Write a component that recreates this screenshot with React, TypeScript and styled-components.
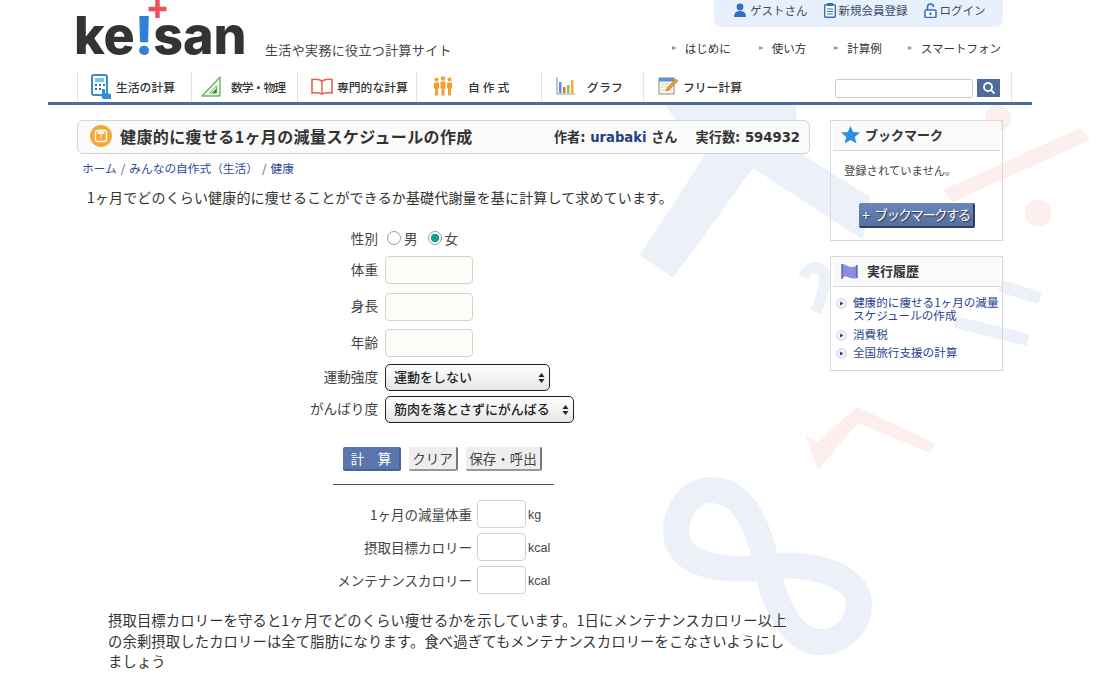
import styled, { createGlobalStyle } from "styled-components";

const GlobalStyle = createGlobalStyle`
  html, body {
    margin: 0;
    padding: 0;
    background: #fff;
  }
  body {
    font-family: "Noto Sans CJK JP", "Noto Sans", sans-serif;
    color: #333;
  }
`;

const Page = styled.div`
  position: relative;
  width: 1100px;
  height: 682px;
  overflow: hidden;
`;

const Decor = styled.svg`
  position: absolute;
  left: 0;
  top: 105px;
`;

const Shell = styled.div`
  position: relative;
  width: 984px;
  margin-left: 48px;
`;

const Header = styled.header`
  background: #fff;
  border-bottom: 3px solid #4f6a9f;
`;

const HeaderTop = styled.div`
  display: flex;
  justify-content: space-between;
  height: 72px;
  padding: 0 29px;
`;

const Brand = styled.div`
  display: flex;
  align-items: flex-end;
  gap: 23px;
`;

const Logo = styled.div`
  position: relative;
  width: 168px;
  height: 60px;
  margin-bottom: 6px;
  margin-left: -3px;
  font-family: Inter, sans-serif;
  font-weight: 800;
  font-size: 52px;
  line-height: 60px;
  letter-spacing: -0.1px;
  color: #333;
  white-space: nowrap;
`;

const Bang = styled.span`
  color: #2f80d8;
`;

const Plus = styled.svg`
  position: absolute;
  left: 74px;
  top: -6px;
`;

const Tagline = styled.div`
  margin-bottom: 14px;
  font-size: 13px;
  line-height: 16px;
  letter-spacing: 0.35px;
  color: #444;
`;

const TopRight = styled.div`
  display: flex;
  flex-direction: column;
  align-items: flex-end;
`;

const UserBox = styled.div`
  display: flex;
  align-items: center;
  width: 289px;
  height: 27px;
  padding: 0 18px 7px 19px;
  box-sizing: border-box;
  gap: 16px;
  background: #e8f0fb;
  border-radius: 0 0 8px 8px;
`;

const UserLink = styled.span`
  display: flex;
  align-items: center;
  gap: 3px;
  font-size: 11.5px;
  line-height: 14px;
  color: #3a4a6a;
  white-space: nowrap;
`;

const SubNav = styled.div`
  display: flex;
  gap: 28px;
  margin-top: 14px;
  margin-right: 2px;
`;

const SubLink = styled.span`
  display: flex;
  align-items: center;
  gap: 8px;
  font-size: 11.5px;
  line-height: 14px;
  color: #333;
  white-space: nowrap;

  &:last-child {
    margin-left: -2px;
  }

  &::before {
    content: "";
    width: 0;
    height: 0;
    border-left: 5px solid #999;
    border-top: 2.5px solid transparent;
    border-bottom: 2.5px solid transparent;
  }
`;

const NavRow = styled.nav`
  display: flex;
  align-items: stretch;
  height: 30px;
  margin-left: 29px;
  border-left: 1px solid #e4e4e4;
`;

const NavItem = styled.div<{ $w: number; $gap: number; $pad: number; $last?: boolean }>`
  display: flex;
  align-items: center;
  width: ${(p) => p.$w}px;
  gap: ${(p) => p.$gap}px;
  padding: 0 0 2px ${(p) => p.$pad}px;
  box-sizing: border-box;
  border-right: ${(p) => (p.$last ? "0" : "1px solid #e4e4e4")};
  font-size: 11.8px;
  font-weight: 500;
  color: #333;
  white-space: nowrap;
`;

const NavLabel = styled.span<{ $sp?: number }>`
  letter-spacing: ${(p) => p.$sp ?? 0}px;
`;

const SearchBox = styled.div`
  display: flex;
  align-items: flex-start;
  gap: 4px;
  flex: 1;
  padding: 7px 11px 0 0;
  justify-content: flex-end;
  margin-right: 20px;
  border-right: 1px solid #e4e4e4;
`;

const SearchInput = styled.input`
  width: 138px;
  height: 19px;
  box-sizing: border-box;
  border: 1px solid #ccc;
  border-radius: 3px;
  background: #fff;
`;

const SearchBtn = styled.div`
  display: flex;
  align-items: center;
  justify-content: center;
  width: 23px;
  height: 18px;
  background: #4f6a9f;
`;

const Main = styled.main`
  display: flex;
  gap: 20px;
  padding: 15px 29px 0;
`;

const Content = styled.div`
  width: 733px;
`;

const TitleBar = styled.div`
  display: flex;
  align-items: center;
  height: 34px;
  box-sizing: border-box;
  padding: 0 9px 2px 12px;
  background: rgba(250, 250, 250, 0.92);
  border: 1px solid #d4d4d4;
  border-radius: 6px;
`;

const TitleIcon = styled.svg`
  margin-right: 8px;
`;

const Title = styled.h1`
  flex: 1;
  margin: 0;
  font-size: 16px;
  line-height: 20px;
  font-weight: 700;
  letter-spacing: 0.38px;
  color: #333;
`;

const Meta = styled.div`
  display: flex;
  gap: 18px;
  font-family: "DejaVu Sans", "Noto Sans CJK JP", sans-serif;
  font-size: 13.2px;
  font-weight: 700;
  color: #333;
  white-space: nowrap;
`;

const Author = styled.span`
  color: #23407f;
`;

const Crumbs = styled.div`
  display: flex;
  gap: 4px;
  margin: 6px 0 0 5px;
  font-size: 11.7px;
  line-height: 16px;
  color: #555;
`;

const Crumb = styled.span`
  color: #2a4a9e;
`;

const Lead = styled.p`
  margin: 11px 0 0 10px;
  font-size: 14px;
  line-height: 20px;
  letter-spacing: 0.15px;
  color: #333;
`;

const FormGrid = styled.div<{ $top: number; $row?: number }>`
  display: grid;
  grid-template-columns: 301px auto;
  column-gap: 7px;
  row-gap: ${(p) => p.$row ?? 0}px;
  align-items: center;
  justify-content: start;
  margin-top: ${(p) => p.$top}px;
`;

const Label = styled.label`
  padding-bottom: 3px;
  text-align: right;
  font-size: 13.6px;
  line-height: 20px;
  color: #444;
`;

const RadioRow = styled.div`
  display: flex;
  align-items: center;
  height: 20px;
  margin-left: 2px;
  padding-bottom: 3px;
  font-size: 13.6px;
  color: #444;
`;

const Radio = styled.input.attrs({ type: "radio" })`
  appearance: none;
  width: 14px;
  height: 14px;
  margin: 0 3px 0 0;
  border: 1px solid #999;
  border-radius: 50%;
  background: #fff;

  &:checked {
    background: radial-gradient(circle, #1a9c96 0 4px, #fff 4.5px);
  }
`;

const RadioText = styled.span`
  margin-right: 10px;
`;

const NumInput = styled.input`
  display: block;
  width: 88px;
  height: 28px;
  box-sizing: border-box;
  border: 1px solid #d2d2d2;
  border-radius: 4px;
  background: #fffdf8;
`;

const SelectWrap = styled.div`
  position: relative;
  width: max-content;
`;

const Select = styled.select<{ $w: number }>`
  appearance: none;
  display: block;
  width: ${(p) => p.$w}px;
  height: 27px;
  box-sizing: border-box;
  padding: 0 0 3px 8px;
  border: 1px solid #222;
  border-radius: 5px;
  background: linear-gradient(#fdfdfd, #f1f1f1 60%, #e3e3e3);
  font-family: inherit;
  font-size: 13px;
  font-weight: 500;
  color: #222;
`;

const SelectArrows = styled.svg`
  position: absolute;
  right: 5px;
  top: 9px;
  pointer-events: none;
`;

const Buttons = styled.div`
  display: flex;
  gap: 8px;
  margin: 24px 0 0 266px;
`;

const Btn = styled.div<{ $primary?: boolean; $w: number }>`
  width: ${(p) => p.$w}px;
  height: 24px;
  box-sizing: border-box;
  text-align: center;
  font-size: 13.5px;
  line-height: 22px;
  white-space: nowrap;
  color: ${(p) => (p.$primary ? "#fff" : "#444")};
  background: ${(p) => (p.$primary ? "#5a76ad" : "#eee")};
  border-right: 2px solid ${(p) => (p.$primary ? "#4a6294" : "#777")};
  border-bottom: 2px solid ${(p) => (p.$primary ? "#4a6294" : "#999")};
  border-radius: 2px;
`;

const Rule = styled.hr`
  width: 221px;
  margin: 13px 0 0 256px;
  border: 0;
  border-top: 1px solid #555;
`;

const ResultGrid = styled.div`
  display: grid;
  grid-template-columns: 395px 49px auto;
  column-gap: 5px;
  row-gap: 5px;
  align-items: center;
  justify-content: start;
  margin-top: 15px;
`;

const ResultLabel = styled.label`
  text-align: right;
  font-size: 13.5px;
  line-height: 20px;
  color: #444;
`;

const ResultInput = styled.input`
  display: block;
  width: 49px;
  height: 28px;
  box-sizing: border-box;
  border: 1px solid #d2d2d2;
  border-radius: 4px;
  background: #fff;
`;

const Unit = styled.span`
  padding-top: 2px;
  margin-left: -3px;
  font-family: "Liberation Sans", Arial, sans-serif;
  font-size: 12.5px;
  color: #444;
`;

const Note = styled.p`
  width: 682px;
  margin: 16px 0 0 31px;
  font-size: 14.3px;
  line-height: 20.5px;
  letter-spacing: 0.15px;
  color: #333;
`;

const Side = styled.aside`
  display: flex;
  flex-direction: column;
  gap: 15px;
  width: 173px;
`;

const Panel = styled.section<{ $h: number }>`
  height: ${(p) => p.$h}px;
  box-sizing: border-box;
  border: 1px solid #d8d8d8;
`;

const PanelHead = styled.div<{ $gap: number }>`
  display: flex;
  align-items: center;
  gap: ${(p) => p.$gap}px;
  height: 30px;
  margin: 0 2px;
  padding: 0 0 2px 8px;
  box-sizing: border-box;
  background: rgba(250, 250, 250, 0.9);
  border-bottom: 1px solid #d8d8d8;
  font-size: 13px;
  font-weight: 700;
  color: #333;
`;

const Empty = styled.p`
  margin: 11px 0 0 13px;
  font-size: 11.3px;
  line-height: 16px;
  color: #444;
`;

const AddBtn = styled.div`
  width: 116px;
  height: 25px;
  margin: 25px 0 0 28px;
  box-sizing: border-box;
  text-align: center;
  background: linear-gradient(#6b86bb, #54709f);
  border-right: 2px solid #2f3f63;
  border-bottom: 2px solid #2f3f63;
  border-radius: 2px;
  font-size: 13.5px;
  line-height: 23px;
  letter-spacing: -1.6px;
  word-spacing: 5px;
  color: #fff;
  text-shadow: 1px 1px 1px #334;
  white-space: nowrap;
`;

const History = styled.ul`
  list-style: none;
  margin: 9px 0 0;
  padding: 0 0 0 5px;
`;

const HistoryItem = styled.li`
  display: flex;
  gap: 6px;
  margin-bottom: 5.5px;
  font-size: 11.6px;
  line-height: 13px;
  color: #2a4290;
`;

const BulletIcon = styled.svg`
  flex: none;
  margin-top: 2px;
`;

const UserIcon = () => (
  <svg width="14" height="14" viewBox="0 0 14 14">
    <circle cx="7" cy="4" r="3.4" fill="#2f6fc4" />
    <path d="M1 14c0-4 2-6 6-6s6 2 6 6z" fill="#2f6fc4" />
  </svg>
);

const SheetIcon = () => (
  <svg width="12" height="15" viewBox="0 0 12 15">
    <rect x="0.7" y="1.7" width="10.6" height="12.6" rx="1" fill="#fff" stroke="#2f6fc4" strokeWidth="1.4" />
    <rect x="3" y="0" width="6" height="3" fill="#2f6fc4" />
    <path d="M3 6h6M3 8.5h6M3 11h6" stroke="#2f6fc4" strokeWidth="1.2" />
  </svg>
);

const LockIcon = () => (
  <svg width="13" height="15" viewBox="0 0 13 15">
    <path d="M3.5 7V4a3 3 0 0 1 6 0" fill="none" stroke="#2f6fc4" strokeWidth="1.6" />
    <rect x="1" y="7" width="11" height="7.5" rx="1" fill="#fff" stroke="#2f6fc4" strokeWidth="1.5" />
    <rect x="5.5" y="9.5" width="2" height="2.6" fill="#2f6fc4" />
  </svg>
);

const CalcIcon = () => (
  <svg width="21" height="25" viewBox="0 0 21 25">
    <rect x="1" y="1" width="15" height="20" rx="2" fill="#fff" stroke="#2f8fd0" strokeWidth="2" />
    <rect x="4" y="4" width="9" height="4" fill="#7cc0e8" />
    <path d="M4 10h2v2H4zM8 10h2v2H8zM12 10h2v2h-2zM4 14h2v2H4zM8 14h2v2H8z" fill="#2f6fa8" />
    <path d="M11 15h3v4l6 1v5H12l-3-5h2z" fill="#2f8fd0" />
  </svg>
);

const RulerIcon = () => (
  <svg width="20" height="21" viewBox="0 0 20 21">
    <path d="M19 1v19H1z" fill="#e9f6e4" stroke="#6cba62" strokeWidth="1.4" strokeLinejoin="round" />
    <path d="M15.5 10v7H9z" fill="#fff" stroke="#6cba62" />
    <path d="M15.5 12v5H11z" fill="#4b7a50" />
  </svg>
);

const BookIcon = () => (
  <svg width="22" height="17" viewBox="0 0 22 17">
    <path d="M11 3C9 1.500 5 1 1 1.500V15c4-.5 8 0 10 1 2-1 6-1.500 10-1V1.500C17 1 13 1.500 11 3z" fill="#fff" stroke="#e8604f" strokeWidth="1.6" />
    <path d="M11 3v13" stroke="#e8604f" strokeWidth="1.4" />
  </svg>
);

const PeopleIcon = () => (
  <svg width="20" height="20" viewBox="0 0 20 20" fill="#f0a030">
    <circle cx="3.500" cy="3.500" r="2" />
    <circle cx="10" cy="2.500" r="2.200" />
    <circle cx="16.500" cy="3.500" r="2" />
    <path d="M1 6.500h5v6H5v7H2v-7H1zM7.500 5.500h5v7h-1v7h-3v-7h-1zM14 6.500h5v6h-1v7h-3v-7h-1z" />
  </svg>
);

const ChartIcon = () => (
  <svg width="20" height="19" viewBox="0 0 20 19">
    <path d="M2 0v17h18" fill="none" stroke="#9a9a9a" strokeWidth="1.2" />
    <rect x="4" y="5" width="2.500" height="11" fill="#5b8fd8" />
    <rect x="8" y="10" width="2.500" height="6" fill="#e8663c" />
    <rect x="12" y="8" width="2.500" height="8" fill="#8cc152" />
    <rect x="16" y="3" width="2.500" height="13" fill="#f0b030" />
  </svg>
);

const NoteIcon = () => (
  <svg width="20" height="20" viewBox="0 0 20 20">
    <rect x="1" y="2" width="15" height="16" fill="#fff8e0" stroke="#8a8a8a" />
    <rect x="1" y="2" width="15" height="3.500" fill="#5b8fd8" />
    <path d="M3 8h11M3 11h11M3 14h11" stroke="#c8d4e8" />
    <path d="M18 3l2 2-9 9-3 1 1-3z" fill="#f0a030" stroke="#b86a10" strokeWidth="0.6" />
  </svg>
);

const SearchIcon = () => (
  <svg width="14" height="14" viewBox="0 0 14 14" fill="none" stroke="#fff" strokeWidth="1.8">
    <circle cx="6" cy="6" r="4" />
    <path d="M9 9l3.500 3.500" />
  </svg>
);

const StarIcon = () => (
  <svg width="19" height="18" viewBox="0 0 19 18">
    <path d="M9.500 0l2.700 6 6.800.6-5.200 4.400 1.700 6.500-6-3.500-6 3.500 1.700-6.500L0 6.600 6.800 6z" fill="#2e8fe0" />
  </svg>
);

const FlagIcon = () => (
  <svg width="17" height="16" viewBox="0 0 17 16">
    <path d="M1 1c2 0 3 1 7 2.500 3 1 6 .5 8-1.500v13c-3 1-5 .5-8-.5C5 13 3 13 1 15.500z" fill="#8a8ee0" />
    <path d="M1 1v15M16 2v13" stroke="#4e5090" strokeWidth="1.200" />
  </svg>
);

const Bullet = () => (
  <BulletIcon width="11" height="11" viewBox="0 0 11 11">
    <circle cx="5.500" cy="5.500" r="4.800" fill="#f2f4fa" stroke="#c8cede" />
    <path d="M4 3.500l3.500 2-3.500 2z" fill="#2a4290" />
  </BulletIcon>
);

const Arrows = () => (
  <SelectArrows width="7" height="10" viewBox="0 0 7 10" fill="#222">
    <path d="M3.500 0l3 4h-6zM3.500 10l3-4h-6z" />
  </SelectArrows>
);

const navItems = [
  { label: "生活の計算", icon: <CalcIcon />, w: 114, gap: 4, pad: 13 },
  { label: "数学・物理", icon: <RulerIcon />, w: 106, gap: 10, pad: 9, sp: -1 },
  { label: "専門的な計算", icon: <BookIcon />, w: 119, gap: 4, pad: 13 },
  { label: "自作式", icon: <PeopleIcon />, w: 125, gap: 15, pad: 16, sp: 3 },
  { label: "グラフ", icon: <ChartIcon />, w: 102, gap: 12, pad: 13, sp: 0.2 },
  { label: "フリー計算", icon: <NoteIcon />, w: 180, gap: 5, pad: 14, last: true },
];

const App = () => {
  return (
    <Page>
      <GlobalStyle />
      <Decor width="1100" height="577" viewBox="0 105 1100 577" fill="none">
        <defs>
          <pattern id="dotBlue" width="2" height="2" patternUnits="userSpaceOnUse">
            <rect width="2" height="2" fill="#f7f9fc" />
            <rect width="1" height="1" fill="#e0e8f3" />
            <rect x="1" y="1" width="1" height="1" fill="#e0e8f3" />
          </pattern>
          <pattern id="dotRed" width="2" height="2" patternUnits="userSpaceOnUse">
            <rect width="2" height="2" fill="#fff9f9" />
            <rect width="1" height="1" fill="#fbe4e4" />
            <rect x="1" y="1" width="1" height="1" fill="#fbe4e4" />
          </pattern>
        </defs>
        <path
          d="M640 255L705 155L660 100H795L800 153L870 197L863 240L753 168L673 278z"
          fill="url(#dotBlue)"
        />
        <path
          d="M767 567C758 520 740 490 712 490C690 490 676 510 676 532C676 558 705 574 767 567C820 560 859 580 859 603C859 625 843 642 820 642C795 642 775 610 767 567z"
          stroke="url(#dotBlue)"
          strokeWidth="26"
        />
        <path d="M803 277Q812 262 823 271Q828 282 816 312" stroke="url(#dotBlue)" strokeWidth="11" />
        <path d="M1000 286L1040 298" stroke="url(#dotBlue)" strokeWidth="12" />
        <path d="M955 322L1028 340" stroke="url(#dotBlue)" strokeWidth="12" />
        <path d="M943 190L1080 128L1090 140L953 202z" fill="url(#dotRed)" />
        <path d="M805 434L817 442L857 407L935 443L930 453L858 423L818 470z" fill="url(#dotRed)" />
        <circle cx="998" cy="118" r="13" fill="url(#dotRed)" />
        <circle cx="1038" cy="213" r="13.5" fill="url(#dotRed)" />
      </Decor>
      <Shell>
        <Header>
          <HeaderTop>
            <Brand>
              <Logo>
                ke<Bang>!</Bang>san
                <Plus width="19" height="18" viewBox="0 0 20 20">
                  <path d="M7.500 0h5v7.500H20v5h-7.500V20h-5v-7.500H0v-5h7.500z" fill="#f0505a" />
                </Plus>
              </Logo>
              <Tagline>生活や実務に役立つ計算サイト</Tagline>
            </Brand>
            <TopRight>
              <UserBox>
                <UserLink>
                  <UserIcon />
                  ゲストさん
                </UserLink>
                <UserLink>
                  <SheetIcon />
                  新規会員登録
                </UserLink>
                <UserLink>
                  <LockIcon />
                  ログイン
                </UserLink>
              </UserBox>
              <SubNav>
                <SubLink>はじめに</SubLink>
                <SubLink>使い方</SubLink>
                <SubLink>計算例</SubLink>
                <SubLink>スマートフォン</SubLink>
              </SubNav>
            </TopRight>
          </HeaderTop>
          <NavRow>
            {navItems.map((item) => (
              <NavItem key={item.label} $w={item.w} $gap={item.gap} $pad={item.pad} $last={item.last}>
                {item.icon}
                <NavLabel $sp={item.sp}>{item.label}</NavLabel>
              </NavItem>
            ))}
            <SearchBox>
              <SearchInput />
              <SearchBtn>
                <SearchIcon />
              </SearchBtn>
            </SearchBox>
          </NavRow>
        </Header>
        <Main>
          <Content>
            <TitleBar>
              <TitleIcon width="22" height="22" viewBox="0 0 22 22">
                <circle cx="11" cy="11" r="11" fill="#f5a93a" />
                <rect x="5.500" y="5.500" width="11" height="11" rx="2" fill="none" stroke="#fff" strokeWidth="1.300" />
                <path d="M7.500 9a3.500 3 0 0 1 7 0zM10.500 9h1v4h-1z" fill="#fff" />
              </TitleIcon>
              <Title>健康的に痩せる1ヶ月の減量スケジュールの作成</Title>
              <Meta>
                <span>
                  作者: <Author>urabaki</Author> さん
                </span>
                <span>実行数: 594932</span>
              </Meta>
            </TitleBar>
            <Crumbs>
              <Crumb>ホーム</Crumb>/<Crumb>みんなの自作式（生活）</Crumb>/<Crumb>健康</Crumb>
            </Crumbs>
            <Lead>1ヶ月でどのくらい健康的に痩せることができるか基礎代謝量を基に計算して求めています。</Lead>
            <FormGrid $top={21}>
              <Label>性別</Label>
              <RadioRow>
                <Radio name="sex" />
                <RadioText>男</RadioText>
                <Radio name="sex" defaultChecked />
                <RadioText>女</RadioText>
              </RadioRow>
            </FormGrid>
            <FormGrid $top={5} $row={8.5}>
              <Label>体重</Label>
              <NumInput />
              <Label>身長</Label>
              <NumInput />
              <Label>年齢</Label>
              <NumInput />
            </FormGrid>
            <FormGrid $top={7} $row={5}>
              <Label>運動強度</Label>
              <SelectWrap>
                <Select $w={165} defaultValue="a">
                  <option value="a">運動をしない</option>
                </Select>
                <Arrows />
              </SelectWrap>
              <Label>がんばり度</Label>
              <SelectWrap>
                <Select $w={189} defaultValue="a">
                  <option value="a">筋肉を落とさずにがんばる</option>
                </Select>
                <Arrows />
              </SelectWrap>
            </FormGrid>
            <Buttons>
              <Btn $primary $w={58}>計　算</Btn>
              <Btn $w={49}>クリア</Btn>
              <Btn $w={76}>保存・呼出</Btn>
            </Buttons>
            <Rule />
            <ResultGrid>
              <ResultLabel>1ヶ月の減量体重</ResultLabel>
              <ResultInput />
              <Unit>kg</Unit>
              <ResultLabel>摂取目標カロリー</ResultLabel>
              <ResultInput />
              <Unit>kcal</Unit>
              <ResultLabel>メンテナンスカロリー</ResultLabel>
              <ResultInput />
              <Unit>kcal</Unit>
            </ResultGrid>
            <Note>
              摂取目標カロリーを守ると1ヶ月でどのくらい痩せるかを示しています。1日にメンテナンスカロリー以上の余剰摂取したカロリーは全て脂肪になります。食べ過ぎてもメンテナンスカロリーをこなさいようにしましょう
            </Note>
          </Content>
          <Side>
            <Panel $h={121}>
              <PanelHead $gap={5}>
                <StarIcon />
                ブックマーク
              </PanelHead>
              <Empty>登録されていません。</Empty>
              <AddBtn>+ ブックマークする</AddBtn>
            </Panel>
            <Panel $h={115}>
              <PanelHead $gap={9}>
                <FlagIcon />
                実行履歴
              </PanelHead>
              <History>
                <HistoryItem>
                  <Bullet />
                  <span>健康的に痩せる1ヶ月の減量スケジュールの作成</span>
                </HistoryItem>
                <HistoryItem>
                  <Bullet />
                  <span>消費税</span>
                </HistoryItem>
                <HistoryItem>
                  <Bullet />
                  <span>全国旅行支援の計算</span>
                </HistoryItem>
              </History>
            </Panel>
          </Side>
        </Main>
      </Shell>
    </Page>
  );
};

export default App;
